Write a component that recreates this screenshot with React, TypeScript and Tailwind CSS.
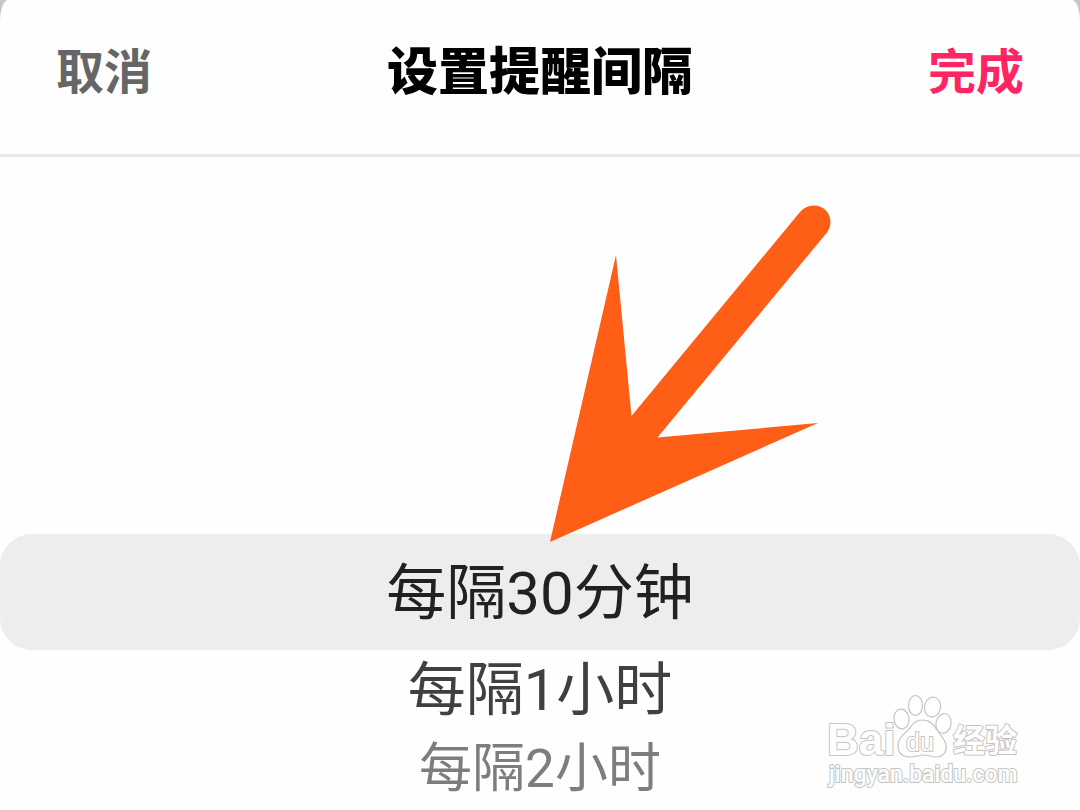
import { useState } from "react";

const intervals = [
  {
    value: "30m",
    label: "每隔30分钟",
    row: "h-[116px] rounded-[32px] bg-[#ededed] pt-1 text-[60px] text-[#212121]",
  },
  {
    value: "1h",
    label: "每隔1小时",
    row: "h-20 text-[58px] text-[#404040]",
  },
  {
    value: "2h",
    label: "每隔2小时",
    row: "h-20 text-[53px] text-[#7d7d7d]",
  },
];

function Arrow() {
  return (
    <svg
      className="absolute top-12 left-1/2 ml-2 h-[340px] w-[284px]"
      viewBox="548 205 284 340"
      fill="#ff5e17"
      aria-hidden="true"
    >
      <path d="M550 542 L616 255 L631.500 416 L800 212 A17 17 0 0 1 827 232.500 L657.500 437.500 L818 423 Z" />
      <circle cx="814" cy="222" r="16.500" />
    </svg>
  );
}

function Watermark() {
  return (
    <svg
      className="absolute right-14 bottom-5 h-24 w-50"
      viewBox="824 693 200 96"
      fill="#ffffff"
      stroke="#c4c4c4"
      strokeWidth="1.200"
      role="img"
      aria-label="Baidu经验"
    >
      <text
        x="827"
        y="754"
        fontSize="44"
        strokeWidth="2"
        strokeLinejoin="round"
        paintOrder="stroke"
        className="font-['Liberation_Sans',sans-serif] font-bold"
      >
        Bai
      </text>
      {/* Paw */}
      <ellipse cx="901.500" cy="718" rx="7.500" ry="10" transform="rotate(-8 901.500 718)" />
      <ellipse cx="915.500" cy="704.500" rx="7" ry="10" />
      <ellipse cx="932.500" cy="706" rx="8" ry="10" transform="rotate(12 932.500 706)" />
      <ellipse cx="943.500" cy="722.500" rx="7.500" ry="10" transform="rotate(12 943.500 722.500)" />
      <path d="M922 719 C914 719 912 725 907 730 C902 735 898 738 898 745 C898 753 904 756 911 756 C916 756 919 754 923 754 C928 754 931 756 936 756 C943 756 947 751 946 744 C945 738 941 735 937 729 C933 723 930 719 922 719 Z" />
      <text
        x="906"
        y="750"
        fontSize="25"
        strokeWidth="2"
        paintOrder="stroke"
        className="font-['Liberation_Sans',sans-serif]"
      >
        du
      </text>
      <text
        x="953"
        y="751"
        fontSize="32"
        strokeWidth="2"
        strokeLinejoin="round"
        paintOrder="stroke"
        className="font-['Noto_Sans_CJK_SC',sans-serif] font-bold"
      >
        经验
      </text>
      <text
        x="829"
        y="781"
        fontSize="23"
        strokeWidth="2"
        strokeLinejoin="round"
        paintOrder="stroke"
        className="font-['Roboto',sans-serif] font-medium"
      >
        jingyan.baidu.com
      </text>
    </svg>
  );
}

export default function App() {
  const [selected, setSelected] = useState("30m");

  return (
    <div className="min-h-screen bg-[#c6c6c6] font-['Roboto','Noto_Sans_CJK_SC',sans-serif]">
      <div className="relative min-h-screen overflow-hidden rounded-t-[8px_22px] bg-[#fefefe]">
        {/* Header */}
        <header className="flex h-[157px] items-start justify-between border-b-3 border-[#e8e8e8] px-14 pt-[37px] font-bold">
          <button type="button" className="text-[48px] leading-[72px] text-[#666666]">
            取消
          </button>
          <h1 className="text-[51px] leading-[72px] font-black text-black">设置提醒间隔</h1>
          <button type="button" className="text-[48px] leading-[72px] text-[#ff2462]">
            完成
          </button>
        </header>

        {/* Interval picker */}
        <fieldset className="relative pt-[377px]">
          <legend className="sr-only" aria-label="设置提醒间隔" />
          {intervals.map((item) => (
            <label
              key={item.value}
              className={`flex cursor-pointer items-center justify-center ${item.row}`}
            >
              <input
                type="radio"
                name="interval"
                value={item.value}
                checked={selected === item.value}
                onChange={() => setSelected(item.value)}
                className="sr-only"
              />
              {item.label}
            </label>
          ))}
          <Arrow />
        </fieldset>

        <Watermark />
      </div>
    </div>
  );
}
